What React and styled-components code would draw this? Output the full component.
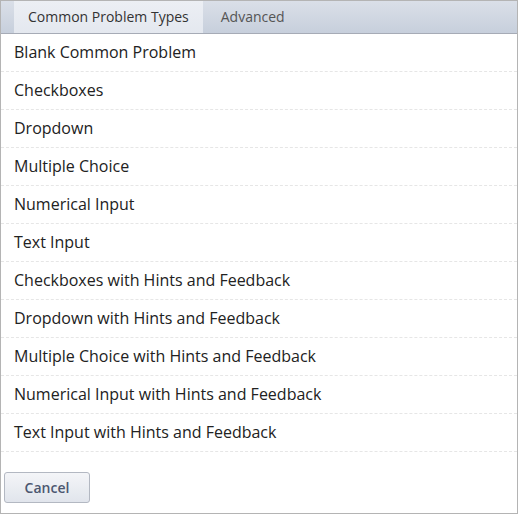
import styled, { createGlobalStyle } from 'styled-components'

const problems = [
  'Blank Common Problem',
  'Checkboxes',
  'Dropdown',
  'Multiple Choice',
  'Numerical Input',
  'Text Input',
  'Checkboxes with Hints and Feedback',
  'Dropdown with Hints and Feedback',
  'Multiple Choice with Hints and Feedback',
  'Numerical Input with Hints and Feedback',
  'Text Input with Hints and Feedback',
]

const App = () => {
  return (
    <>
      <GlobalStyle />
      <Panel>
        <Tabs>
          <Tab $active>Common Problem Types</Tab>
          <Tab>Advanced</Tab>
        </Tabs>
        <List>
          {problems.map((name) => (
            <Item key={name}>{name}</Item>
          ))}
        </List>
        <Footer>
          <CancelButton>Cancel</CancelButton>
        </Footer>
      </Panel>
    </>
  )
}

const GlobalStyle = createGlobalStyle`
  body {
    margin: 0;
    background: #fff;
    font-family: "Open Sans", "Noto Sans", sans-serif;
  }
`
const Panel = styled.div`
  width: 518px;
  height: 514px;
  box-sizing: border-box;
  border: 1px solid #b4b4b4;
  display: flex;
  flex-direction: column;
`
const Tabs = styled.div`
  display: flex;
  height: 32px;
  padding-left: 13px;
  background: linear-gradient(#dadfe8, #c7cfdc);
  border-bottom: 1px solid #a6abb6;
`
const Tab = styled.div`
  display: flex;
  align-items: center;
  padding: 0 ${(p) => (p.$active ? '14px' : '18px')} 2px;
  font-size: 14px;
  color: ${(p) => (p.$active ? '#333' : '#555')};
  background: ${(p) => (p.$active ? 'linear-gradient(#eceff4, #e4e8ef)' : 'transparent')};
`
const List = styled.ul`
  list-style: none;
  margin: 0;
  padding: 0;
`
const Item = styled.li`
  height: 38px;
  box-sizing: border-box;
  padding: 0 13px 2px;
  display: flex;
  align-items: center;
  font-size: 16px;
  color: #222;
  border-bottom: 1px dashed #e6e6e6;
`
const Footer = styled.div`
  padding: 20px 3px 0;
`
const CancelButton = styled.button`
  width: 86px;
  height: 31px;
  padding-bottom: 2px;
  border: 1px solid #b3b8c2;
  border-radius: 3px;
  background: linear-gradient(#f4f5f8, #e1e5ec);
  font-family: "Open Sans", "Noto Sans", sans-serif;
  font-size: 14px;
  font-weight: 600;
  color: #4c5770;
  cursor: pointer;
`

export default App
